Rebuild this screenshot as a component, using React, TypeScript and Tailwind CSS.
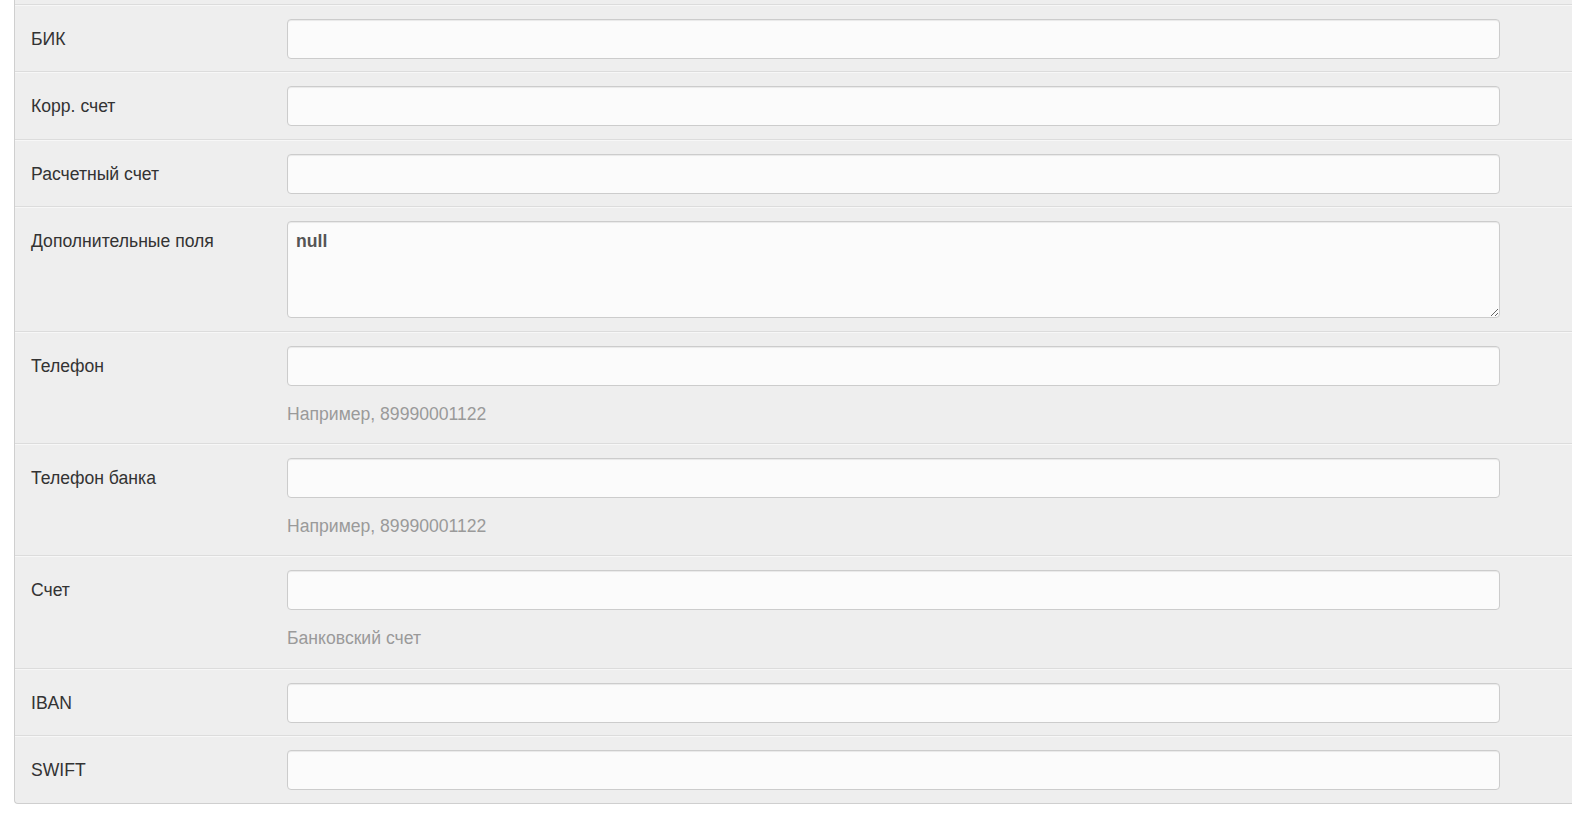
import React from 'react';

type Field = {
  label: string;
  help?: string;
  textarea?: boolean;
  value?: string;
};

const fields: Field[] = [
  { label: 'БИК' },
  { label: 'Корр. счет' },
  { label: 'Расчетный счет' },
  { label: 'Дополнительные поля', textarea: true, value: 'null' },
  { label: 'Телефон', help: 'Например, 89990001122' },
  { label: 'Телефон банка', help: 'Например, 89990001122' },
  { label: 'Счет', help: 'Банковский счет' },
  { label: 'IBAN' },
  { label: 'SWIFT' },
];

function FormRow({ field }: { field: Field }) {
  return (
    <div className="flex border-t border-[#dcdcdc] pt-[14px] pb-[12.4px] shadow-[inset_0_1px_0_#f7f7f7]">
      <label className="w-[272px] shrink-0 pl-[16px] pt-[8px] leading-6 text-[#333]">
        {field.label}
      </label>
      <div className="w-[1213px] shrink-0">
        {field.textarea ? (
          <textarea
            defaultValue={field.value}
            className="block h-[97px] w-full rounded-[4px] border border-[#cccccc] bg-[#fbfbfb] px-[8px] pt-[7px] pb-[6px] font-bold leading-6 text-[#555] shadow-[inset_0_1px_1px_rgba(0,0,0,0.075)] outline-none"
          />
        ) : (
          <input
            type="text"
            className="block h-[40px] w-full rounded-[4px] border border-[#cccccc] bg-[#fbfbfb] px-[9px] leading-6 text-[#555] shadow-[inset_0_1px_1px_rgba(0,0,0,0.075)] outline-none"
          />
        )}
        {field.help && (
          <p className="mt-[16px] mb-[5px] leading-6 text-[#9a9a9a]">{field.help}</p>
        )}
      </div>
    </div>
  );
}

export default function App() {
  return (
    <div
      className="h-[832px] w-[1572px] overflow-hidden bg-white text-[17.6px]"
      style={{ fontFamily: '"Liberation Sans", Arial, sans-serif' }}
    >
      <div className="ml-[14px] w-[1600px] rounded-bl-[4px] border-b border-l border-[#cfcfcf] bg-[#eeeeee]">
        <div className="h-[4px]" />
        {fields.map((f) => (
          <FormRow key={f.label} field={f} />
        ))}
      </div>
    </div>
  );
}
